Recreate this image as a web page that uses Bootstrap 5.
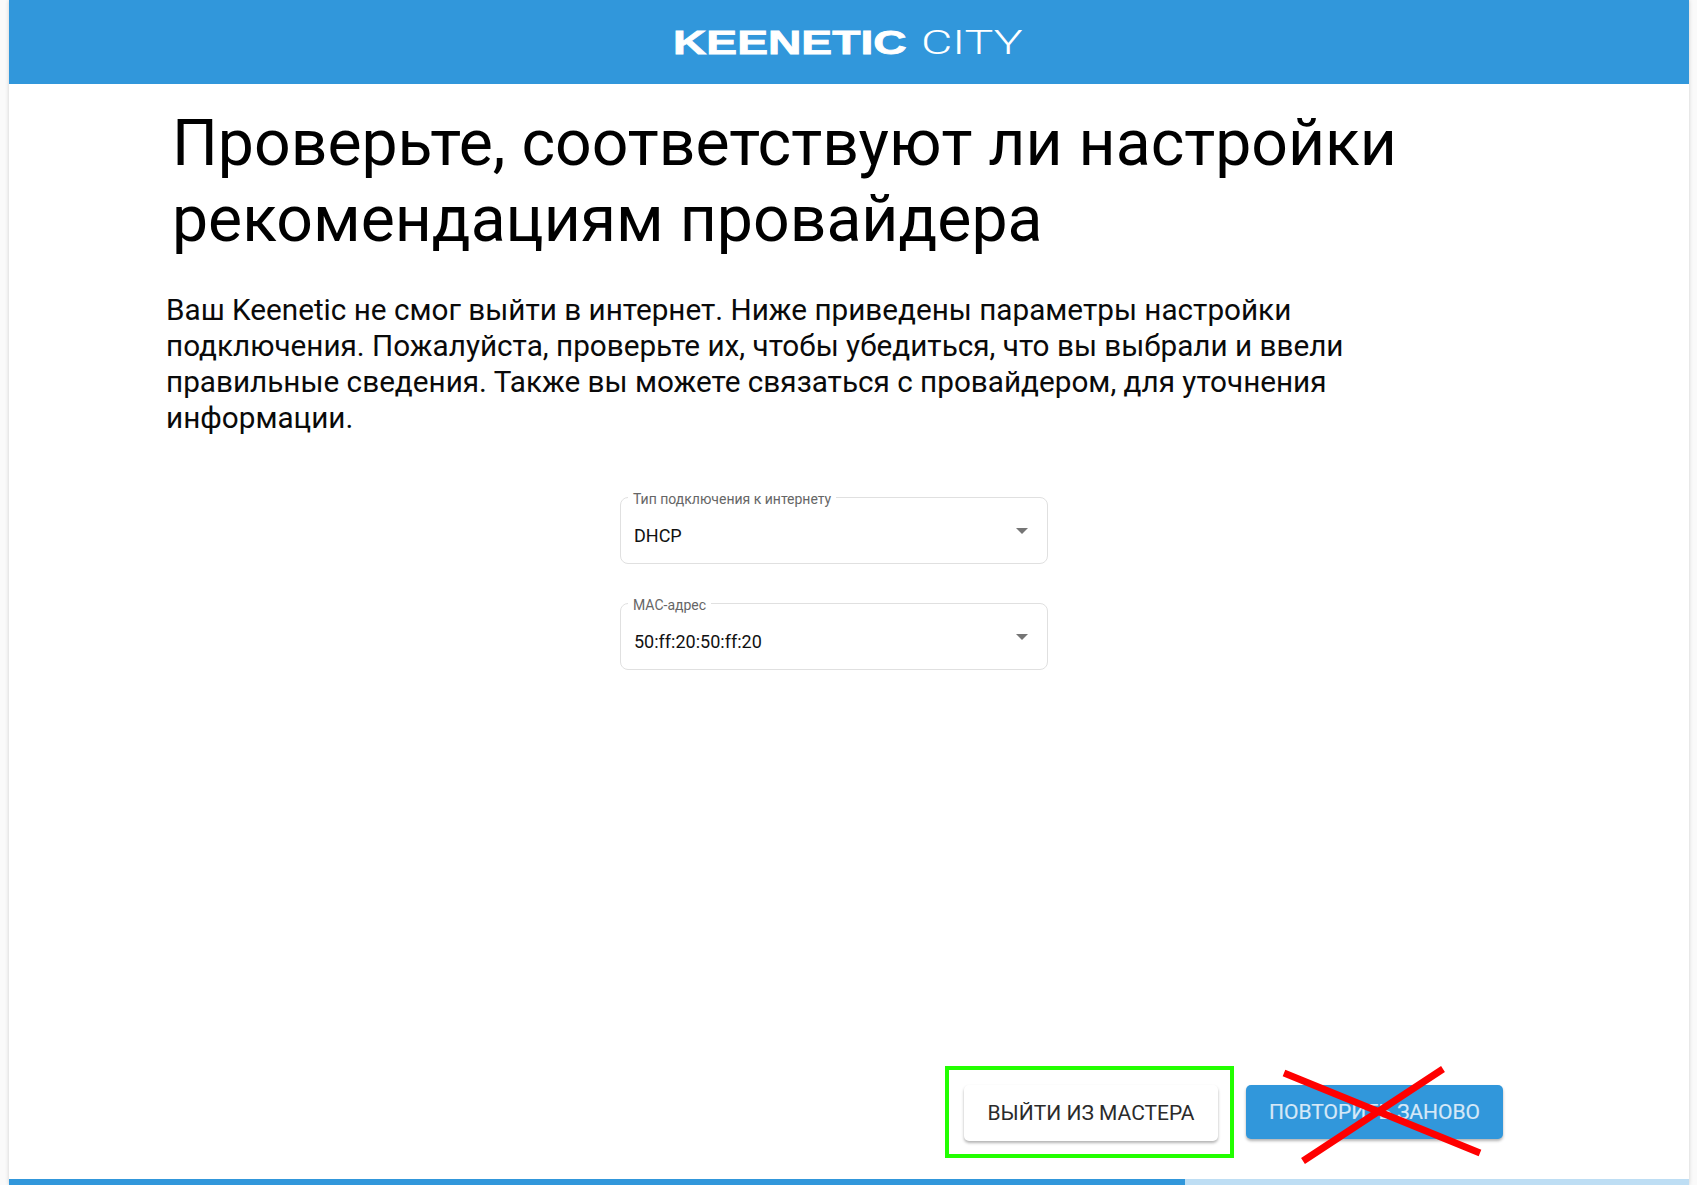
<!DOCTYPE html>
<html lang="ru">
<head>
<meta charset="utf-8">
<title>Keenetic</title>
<link href="https://cdn.jsdelivr.net/npm/bootstrap@5.3.0/dist/css/bootstrap.min.css" rel="stylesheet">
<style>
html,body{height:100%;overflow:hidden}
body{background:#fafafa;font-family:Roboto,"Liberation Sans",sans-serif;color:#000}
.shell{height:1185px;margin:0 8px 0 9px;background:#fff;box-shadow:0 0 4px rgba(0,0,0,.18);display:flex;flex-direction:column}
.topbar{height:84px;flex:none;background:#3197db;color:#fff;display:flex;align-items:center;padding-left:664px}
.logo-a,.logo-b{display:inline-block;line-height:1;text-transform:uppercase;white-space:nowrap;transform-origin:left center}
.logo-a{font-family:"Liberation Sans",sans-serif;font-weight:700;font-size:33px;width:248px;transform:scaleX(1.4);-webkit-text-stroke:.8px #fff}
.logo-b{font-family:Roboto,sans-serif;font-weight:300;font-size:34px;width:100px;transform:scaleX(1.42)}
.wizard{flex:1 1 auto;min-height:0;display:flex;flex-direction:column;padding:0 0 0 157px}
.heading{font-family:Roboto,sans-serif;font-weight:400;font-size:64.3px;line-height:76px;margin:21px 0 0 6px;width:1290px}
.intro{font-size:29.7px;line-height:36px;margin:35px 0 0;width:1190px;color:#0a0a0a}
.fields{width:428px;margin:52px 0 0 454px;display:flex;flex-direction:column;gap:30px}
.outfield{border:1px solid #e0e0e0;border-radius:8px;padding:0 13px;height:76px;margin:0;min-width:0;position:relative}
.outfield legend{float:none;width:auto;font-size:14px;line-height:14px;color:#666;padding:4px 5px 0;margin:0 0 0 -6px}
.valrow{display:flex;justify-content:space-between;align-items:center;font-size:18px;color:#111;padding-top:16px}
.caret-ico{width:0;height:0;border-left:6px solid transparent;border-right:6px solid transparent;border-top:6px solid #757575;margin:-9px 6px 0 0}
.actions{margin-top:auto;display:flex;align-items:center;justify-content:flex-end;padding:0 186px 21px 0;gap:12px}
.marked{border:4px solid #22ff00;padding:15px 12px 13px 15px;line-height:1}
.mbtn{width:254px;height:56px;border:0;border-radius:5px;font-size:21px;font-family:Roboto,sans-serif;text-transform:uppercase;padding:1px 0 0;box-shadow:0 2px 3px rgba(0,0,0,.3)}
.mbtn-w{background:#fff;color:#2b2b2b}
.mbtn-b{background:#3197db;color:#d6e8f7;width:257px;height:54px;-webkit-text-stroke:.2px #d6e8f7}
.retry{position:relative;line-height:0}
.crossout{position:absolute;left:38px;top:-16px;width:196px;height:92px;pointer-events:none;overflow:visible}
.loadbar{height:6px;flex:none;background:#bedef4;border-radius:0}
.loadbar .progress-bar{background:#3197db}
</style>
</head>
<body>
<div class="shell">
  <header class="topbar">
    <span class="logo-a">Keenetic</span><span class="logo-b">City</span>
  </header>
  <main class="wizard">
    <h1 class="heading">Проверьте, соответствуют ли настройки рекомендациям провайдера</h1>
    <p class="intro">Ваш Keenetic не смог выйти в интернет. Ниже приведены параметры настройки подключения. Пожалуйста, проверьте их, чтобы убедиться, что вы выбрали и ввели правильные сведения. Также вы можете связаться с провайдером, для уточнения информации.</p>
    <div class="fields">
      <fieldset class="outfield">
        <legend>Тип подключения к интернету</legend>
        <div class="valrow"><span>DHCP</span><span class="caret-ico"></span></div>
      </fieldset>
      <fieldset class="outfield">
        <legend>MAC-адрес</legend>
        <div class="valrow"><span>50:ff:20:50:ff:20</span><span class="caret-ico"></span></div>
      </fieldset>
    </div>
    <div class="actions">
      <div class="marked"><button type="button" class="btn mbtn mbtn-w">Выйти из мастера</button></div>
      <div class="retry">
        <button type="button" class="btn mbtn mbtn-b">Повторить заново</button>
        <svg class="crossout" viewBox="0 0 196 92"><path d="M0 4 196 84M159 0 19 92" stroke="#ff0000" stroke-width="7" fill="none"/></svg>
      </div>
    </div>
  </main>
  <div class="progress loadbar"><div class="progress-bar" style="width:70%"></div></div>
</div>
</body>
</html>
